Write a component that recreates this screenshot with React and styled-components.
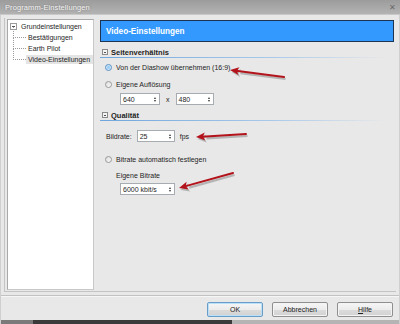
import React from "react";
import styled, { createGlobalStyle } from "styled-components";

const GlobalStyle = createGlobalStyle`
  html, body {
    margin: 0;
    padding: 0;
    background: #e6e6e6;
  }
  body {
    font-family: "Liberation Sans", Arial, sans-serif;
    font-size: 7px;
    color: #1e1e1e;
  }
`;

const Window = styled.div`
  position: relative;
  width: 400px;
  height: 324px;
  background: #e8e8e8;
  display: flex;
  flex-direction: column;
  overflow: hidden;
  white-space: nowrap;
`;

const TitleBar = styled.div`
  height: 14px;
  flex: none;
  background: linear-gradient(#9c9c9c, #b3b3b3);
  border-bottom: 1px solid #c9c9c9;
  display: flex;
  align-items: center;
  justify-content: space-between;
  padding: 0 4px 0 5px;
  color: #f4f4f4;
  font-size: 7.5px;
  letter-spacing: 0.1px;
  text-shadow: 0 0 2px rgba(80, 80, 80, 0.6);
`;

const CloseX = styled.span`
  color: #6a6a6a;
  font-size: 8px;
  text-shadow: none;
`;

const Body = styled.div`
  flex: 1;
  display: flex;
  flex-direction: column;
  border-left: 1px solid #cfcfcf;
  border-right: 1px solid #cfcfcf;
`;

const Group = styled.div`
  display: flex;
  margin: 3px 3px 0 3px;
  padding: 1px 0 2px 2px;
  border-left: 1px solid #c4c4c4;
  border-bottom: 1px solid #c4c4c4;
  height: 274px;
  box-sizing: border-box;
`;

const Tree = styled.div`
  width: 87px;
  height: 271px;
  box-sizing: border-box;
  background: #ffffff;
  border: 1px solid #a9a9a9;
  border-right-color: #c8c8c8;
  border-bottom-color: #c8c8c8;
  padding: 1px 0 0 2px;
  flex: none;
  overflow: hidden;
`;

const TreeRoot = styled.div`
  display: flex;
  align-items: center;
  height: 11px;
  gap: 4px;
`;

const Expander = styled.span`
  width: 5px;
  height: 5px;
  border: 1px solid #9a9a9a;
  position: relative;
  flex: none;
  &::after {
    content: "";
    position: absolute;
    left: 1px;
    right: 1px;
    top: 2px;
    height: 1px;
    background: #555;
  }
`;

const TreeChildren = styled.div`
  margin-left: 3px;
`;

const TreeChild = styled.div`
  position: relative;
  height: 11px;
  display: flex;
  align-items: center;
  padding-left: 13px;
  &::before {
    content: "";
    position: absolute;
    left: 0;
    top: -5px;
    width: 12px;
    height: 10px;
    border-left: 1px dotted #9c9c9c;
    border-bottom: 1px dotted #9c9c9c;
  }
`;

const TreeLabel = styled.span`
  padding: 1px 3px 1px 2px;
  background: ${(p) => (p.$selected ? "#e4e4e4" : "transparent")};
`;

const Content = styled.div`
  margin-left: 6px;
  margin-top: 1px;
  width: 294px;
  display: flex;
  flex-direction: column;
`;

const Header = styled.div`
  height: 22px;
  box-sizing: border-box;
  background: #3399ff;
  border: 1px solid #1d3550;
  color: #ffffff;
  font-weight: bold;
  font-size: 8.2px;
  display: flex;
  align-items: center;
  padding-left: 5px;
`;

const SectionTitle = styled.div`
  margin-top: ${(p) => p.$top}px;
  height: 10px;
  display: flex;
  align-items: center;
  gap: 3px;
  padding-left: 2px;
  font-weight: bold;
  font-size: 7.5px;
  position: relative;
  &::after {
    content: "";
    position: absolute;
    left: 0;
    right: 8px;
    bottom: -1px;
    height: 1px;
    background: linear-gradient(90deg, #6fa6dc, #a9c9ea 60%, rgba(220, 230, 240, 0));
  }
`;

const SmallMinus = styled(Expander)`
  width: 4px;
  height: 4px;
  border-color: #8a8a8a;
  background: #f4f4f4;
  &::after {
    top: 1.5px;
  }
`;

const Row = styled.div`
  margin-top: ${(p) => p.$top}px;
  height: ${(p) => p.$h || 10}px;
  display: flex;
  align-items: center;
  padding-left: ${(p) => p.$indent}px;
  gap: ${(p) => p.$gap || 0}px;
`;

const Radio = styled.span`
  width: 7px;
  height: 7px;
  border-radius: 50%;
  box-sizing: border-box;
  border: 1px solid ${(p) => (p.$checked ? "#5a8fc4" : "#9a9a9a")};
  background: ${(p) =>
    p.$checked
      ? "radial-gradient(circle, #9fd0f5 0 35%, #cfe6f7 60%, #e9f3fb 100%)"
      : "linear-gradient(135deg, #dcdcdc, #fafafa)"};
  margin-right: 4px;
  flex: none;
`;

const SpinBox = styled.div`
  width: ${(p) => p.$w}px;
  height: 12px;
  box-sizing: border-box;
  background: #ffffff;
  border: 1px solid #a7abb2;
  display: flex;
  align-items: center;
  justify-content: space-between;
  padding: 0 3px 0 2px;
  flex: none;
`;

const Arrows = styled.span`
  display: flex;
  flex-direction: column;
  gap: 1px;
  &::before,
  &::after {
    content: "";
    width: 0;
    height: 0;
    border-left: 1.5px solid transparent;
    border-right: 1.5px solid transparent;
  }
  &::before {
    border-bottom: 2px solid #333;
  }
  &::after {
    border-top: 2px solid #333;
  }
`;

const Separator = styled.div`
  margin: 3px 0 0 0;
  height: 1px;
  background: #c2c2c2;
  border-bottom: 1px solid #f6f6f6;
`;

const ButtonRow = styled.div`
  display: flex;
  justify-content: flex-end;
  gap: 9px;
  padding: 5px 6px 0 0;
`;

const Button = styled.div`
  width: 56px;
  height: 15px;
  box-sizing: border-box;
  border: 1px solid ${(p) => (p.$default ? "#6a9cc8" : "#8f8f8f")};
  border-radius: 2px;
  background: linear-gradient(#f6f6f6 0%, #ececec 50%, #dcdcdc 51%, #d2d2d2 100%);
  box-shadow: inset 0 0 0 1px ${(p) => (p.$default ? "#b8e0f8" : "#f4f4f4")};
  display: flex;
  align-items: center;
  justify-content: center;
  font-size: 7px;
  color: #222;
`;

const Taskbar = styled.div`
  margin-top: auto;
  height: 4px;
  background: linear-gradient(90deg, #7a7a7a 0 8%, #3a3a3a 8% 58%, #b4b4b4 58% 100%);
`;

const Overlay = styled.svg`
  position: absolute;
  left: 0;
  top: 0;
  pointer-events: none;
`;

const arrows = [
  { from: [284, 77], to: [230, 70] },
  { from: [246, 134], to: [196, 137] },
  { from: [233, 173], to: [179, 188] },
];

function RedArrow({ from, to }) {
  const [x1, y1] = from;
  const [x2, y2] = to;
  const dx = x2 - x1;
  const dy = y2 - y1;
  const len = Math.hypot(dx, dy);
  const ux = dx / len;
  const uy = dy / len;
  const bx = x2 - ux * 9;
  const by = y2 - uy * 9;
  const px = -uy * 4;
  const py = ux * 4;
  const head = `${x2},${y2} ${bx + px},${by + py} ${bx + ux * 2},${by + uy * 2} ${bx - px},${by - py}`;
  return (
    <g>
      <g transform="translate(1.5,2)" opacity="0.35">
        <line x1={x1} y1={y1} x2={bx} y2={by} stroke="#555" strokeWidth="2.2" />
        <polygon points={head} fill="#555" />
      </g>
      <line x1={x1} y1={y1} x2={bx + ux * 3} y2={by + uy * 3} stroke="#b3141c" strokeWidth="2" strokeLinecap="round" />
      <polygon points={head} fill="#b3141c" />
    </g>
  );
}

export default function App() {
  return (
    <Window>
      <GlobalStyle />
      <TitleBar>
        <span>Programm-Einstellungen</span>
        <CloseX>✕</CloseX>
      </TitleBar>
      <Body>
        <Group>
          <Tree>
            <TreeRoot>
              <Expander />
              <span>Grundeinstellungen</span>
            </TreeRoot>
            <TreeChildren>
              <TreeChild>
                <TreeLabel>Bestätigungen</TreeLabel>
              </TreeChild>
              <TreeChild>
                <TreeLabel>Earth Pilot</TreeLabel>
              </TreeChild>
              <TreeChild>
                <TreeLabel $selected>Video-Einstellungen</TreeLabel>
              </TreeChild>
            </TreeChildren>
          </Tree>
          <Content>
            <Header>Video-Einstellungen</Header>
            <SectionTitle $top={5}>
              <SmallMinus />
              Seitenverhältnis
            </SectionTitle>
            <Row $top={5} $indent={5}>
              <Radio $checked />
              Von der Diashow übernehmen (16:9)
            </Row>
            <Row $top={7} $indent={5}>
              <Radio />
              Eigene Auflösung
            </Row>
            <Row $top={4} $h={12} $indent={20} $gap={6}>
              <SpinBox $w={40}>
                640
                <Arrows />
              </SpinBox>
              x
              <SpinBox $w={38}>
                480
                <Arrows />
              </SpinBox>
            </Row>
            <SectionTitle $top={5}>
              <SmallMinus />
              Qualität
            </SectionTitle>
            <Row $top={10} $h={12} $indent={6} $gap={5}>
              <span>Bildrate:</span>
              <SpinBox $w={38}>
                25
                <Arrows />
              </SpinBox>
              <span>fps</span>
            </Row>
            <Row $top={12} $indent={5}>
              <Radio />
              Bitrate automatisch festlegen
            </Row>
            <Row $top={6} $indent={16}>
              Eigene Bitrate
            </Row>
            <Row $top={3} $h={12} $indent={20}>
              <SpinBox $w={55}>
                6000 kbit/s
                <Arrows />
              </SpinBox>
            </Row>
          </Content>
        </Group>
        <Separator />
        <ButtonRow>
          <Button $default>OK</Button>
          <Button>Abbrechen</Button>
          <Button>
            <span>
              <u>H</u>ilfe
            </span>
          </Button>
        </ButtonRow>
        <Taskbar />
      </Body>
      <Overlay width="400" height="324" viewBox="0 0 400 324">
        {arrows.map((a, i) => (
          <RedArrow key={i} from={a.from} to={a.to} />
        ))}
      </Overlay>
    </Window>
  );
}
